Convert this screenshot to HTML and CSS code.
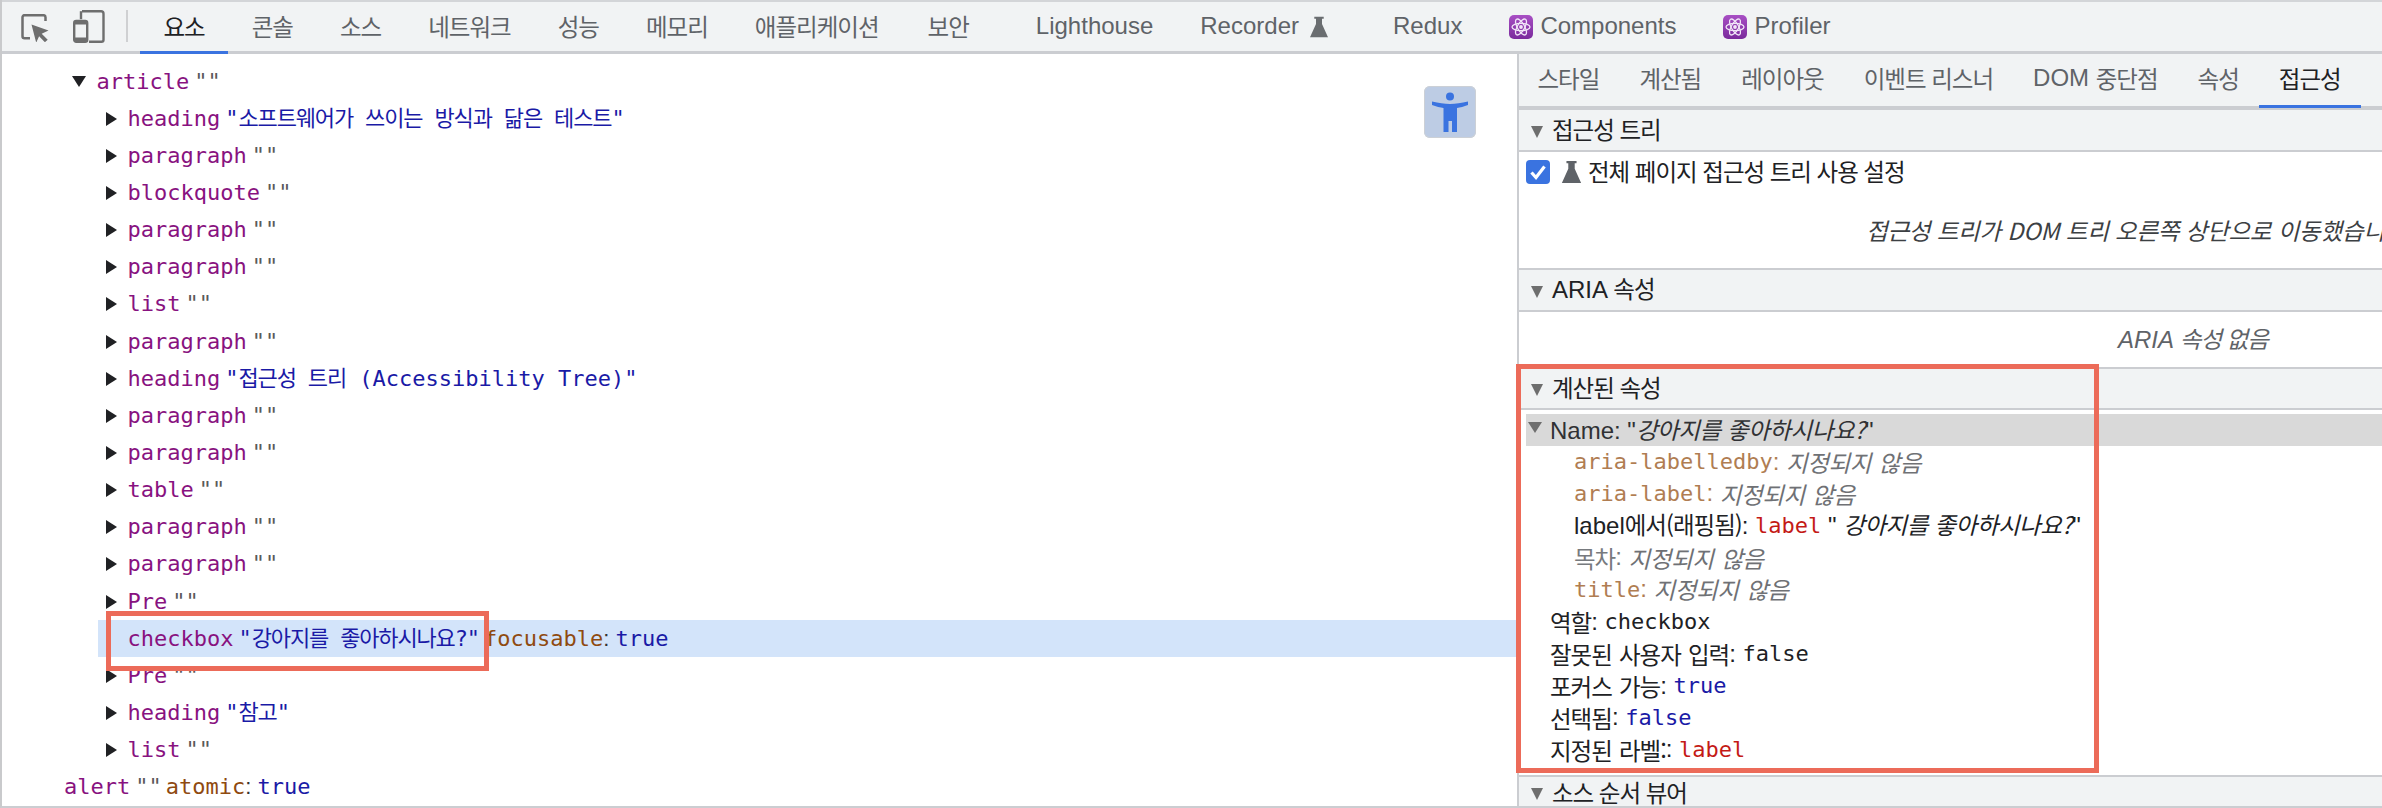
FILE: index.html
```html
<!DOCTYPE html>
<html lang="ko">
<head>
<meta charset="utf-8">
<title>DevTools 접근성</title>
<link rel="stylesheet" href="styles.css">
</head>
<body>
<div class="app">
  <header class="toolbar">
    <div class="tool-icons">
      <svg class="ic-inspect" width="28" height="28" viewBox="0 0 28 28"><path d="M9 24.2H3.5a2 2 0 0 1-2-2V3.2a2 2 0 0 1 2-2h19a2 2 0 0 1 2 2V7" fill="none" stroke="#6e6e6e" stroke-width="2.5"/><path d="M10.5 10.5l17 6-6.800 3.200 6 6-2.800 2.500-5.800-6-2.900 6.500z" fill="#6e6e6e"/></svg>
      <svg class="ic-device" width="32" height="33" viewBox="0 0 32 33"><path d="M9 1.200h19a2.500 2.500 0 0 1 2.500 2.500v26a2 2 0 0 1-2 2H16" fill="none" stroke="#6e6e6e" stroke-width="2.400"/><path d="M8 1.200v8" stroke="#6e6e6e" stroke-width="2.400"/><rect x="1.200" y="11" width="13" height="20.800" rx="2" fill="none" stroke="#6e6e6e" stroke-width="2.400"/><rect x="1" y="11" width="13.500" height="3.500" fill="#6e6e6e"/><rect x="1" y="27.500" width="13.500" height="4.500" fill="#6e6e6e"/></svg>
    </div>
    <div class="vsep"></div>
    <nav class="tabs">
      <span class="tab ko active">요소</span>
      <span class="tab ko">콘솔</span>
      <span class="tab ko">소스</span>
      <span class="tab ko">네트워크</span>
      <span class="tab ko">성능</span>
      <span class="tab ko">메모리</span>
      <span class="tab ko">애플리케이션</span>
      <span class="tab ko tab-sec">보안</span>
      <span class="tab tab-gap">Lighthouse</span>
      <span class="tab">Recorder<svg class="flask flask-tab" width="18" height="24" viewBox="0 0 21 24"><path d="M5 0h11v2.500h-2v6L21 24H0L7 8.500v-6H5z" fill="#6a6d70"/></svg></span>
      <span class="tab tab-redux">Redux</span>
      <span class="tab tab-react tab-components"><svg class="react" width="24" height="24" viewBox="0 0 24 24"><use href="#react-icon"/></svg>Components</span>
      <span class="tab tab-react"><svg class="react" width="24" height="24" viewBox="0 0 24 24"><use href="#react-icon"/></svg>Profiler</span>
    </nav>
  </header>

  <main class="main">
    <section class="tree">
      <div class="row d1"><i class="caret down"></i><b class="role">article</b><span class="q">""</span></div>
      <div class="row d2"><i class="caret"></i><b class="role">heading</b><span class="str">"<span class="han">소프트웨어가 쓰이는 방식과 닮은 테스트</span>"</span></div>
      <div class="row d2"><i class="caret"></i><b class="role">paragraph</b><span class="q">""</span></div>
      <div class="row d2"><i class="caret"></i><b class="role">blockquote</b><span class="q">""</span></div>
      <div class="row d2"><i class="caret"></i><b class="role">paragraph</b><span class="q">""</span></div>
      <div class="row d2"><i class="caret"></i><b class="role">paragraph</b><span class="q">""</span></div>
      <div class="row d2"><i class="caret"></i><b class="role">list</b><span class="q">""</span></div>
      <div class="row d2"><i class="caret"></i><b class="role">paragraph</b><span class="q">""</span></div>
      <div class="row d2"><i class="caret"></i><b class="role">heading</b><span class="str">"<span class="han">접근성 트리</span> (Accessibility Tree)"</span></div>
      <div class="row d2"><i class="caret"></i><b class="role">paragraph</b><span class="q">""</span></div>
      <div class="row d2"><i class="caret"></i><b class="role">paragraph</b><span class="q">""</span></div>
      <div class="row d2"><i class="caret"></i><b class="role">table</b><span class="q">""</span></div>
      <div class="row d2"><i class="caret"></i><b class="role">paragraph</b><span class="q">""</span></div>
      <div class="row d2"><i class="caret"></i><b class="role">paragraph</b><span class="q">""</span></div>
      <div class="row d2"><i class="caret"></i><b class="role">Pre</b><span class="q">""</span></div>
      <div class="row d2 selected"><i class="caret none"></i><b class="role">checkbox</b><span class="str">"<span class="han">강아지를 좋아하시나요?</span>"</span><span class="attr">focusable</span><span class="colon">: </span><span class="val">true</span></div>
      <div class="row d2"><i class="caret"></i><b class="role">Pre</b><span class="q">""</span></div>
      <div class="row d2"><i class="caret"></i><b class="role">heading</b><span class="str">"<span class="han">참고</span>"</span></div>
      <div class="row d2"><i class="caret"></i><b class="role">list</b><span class="q">""</span></div>
      <div class="row d0"><b class="role">alert</b><span class="q">""</span><span class="attr">atomic</span><span class="colon">: </span><span class="val">true</span></div>

      <button class="a11y-btn" type="button" aria-label="접근성 트리">
        <svg width="52" height="52" viewBox="0 0 52 52"><circle cx="26" cy="10.500" r="4" fill="#3a73e0"/><path d="M8 15.500C15 17 20 18 26 18s11-1 18-2.500V19c-4 1.500-8 2.500-11 3V46h-5V35h-3.500v11H19.500V22c-3-.5-7.500-1.500-11.500-3z" fill="#3a73e0"/></svg>
      </button>
      <div class="mark mark-row"></div>
    </section>

    <aside class="side">
      <nav class="side-tabs">
        <span class="stab ko">스타일</span>
        <span class="stab ko">계산됨</span>
        <span class="stab ko">레이아웃</span>
        <span class="stab ko">이벤트 리스너</span>
        <span class="stab">DOM <span class="ko">중단점</span></span>
        <span class="stab ko">속성</span>
        <span class="stab ko active">접근성</span>
      </nav>

      <h2 class="sec-head h40"><i class="tri"></i><span class="ko">접근성 트리</span></h2>
      <div class="sec-body tree-opt">
        <label class="opt"><span class="check"><svg width="24" height="24" viewBox="0 0 24 24"><path d="M5.500 12.500l4.500 5 8.500-11" fill="none" stroke="#fff" stroke-width="3.200"/></svg></span><svg class="flask" width="21" height="22" viewBox="0 0 21 24"><path d="M5 0h11v2.500h-2v6L21 24H0L7 8.500v-6H5z" fill="#5f6368"/></svg><span class="ko opt-text">전체 페이지 접근성 트리 사용 설정</span></label>
        <p class="note note-moved ko">접근성 트리가 DOM 트리 오른쪽 상단으로 이동했습니다.</p>
      </div>

      <h2 class="sec-head h40">
        <i class="tri"></i><span>ARIA <span class="ko">속성</span></span></h2>
      <div class="sec-body aria-body"><p class="note note-aria">ARIA <span class="ko">속성 없음</span></p></div>

      <h2 class="sec-head h39"><i class="tri"></i><span class="ko">계산된 속성</span></h2>
      <div class="sec-body computed">
        <div class="name-row"><i class="tri tri-name"></i><span>Name: "<em class="ko">강아지를 좋아하시나요?</em>"</span></div>
        <div class="prop in"><span class="mono tan">aria-labelledby</span><span class="tan">: </span><em class="ko muted">지정되지 않음</em></div>
        <div class="prop in"><span class="mono tan">aria-label</span><span class="tan">: </span><em class="ko muted">지정되지 않음</em></div>
        <div class="prop in"><span>label<span class="ko">에서(래핑됨)</span>: </span><span class="mono red">label</span><span> " <em class="ko">강아지를 좋아하시나요?</em>"</span></div>
        <div class="prop in"><span class="ko gray">목차</span><span class="gray">: </span><em class="ko muted">지정되지 않음</em></div>
        <div class="prop in"><span class="mono tan">title</span><span class="tan">: </span><em class="ko muted">지정되지 않음</em></div>
        <div class="prop"><span class="ko">역할</span><span>: </span><span class="mono">checkbox</span></div>
        <div class="prop"><span class="ko">잘못된 사용자 입력</span><span>: </span><span class="mono">false</span></div>
        <div class="prop"><span class="ko">포커스 가능</span><span>: </span><span class="mono blue">true</span></div>
        <div class="prop"><span class="ko">선택됨</span><span>: </span><span class="mono blue">false</span></div>
        <div class="prop"><span class="ko">지정된 라벨:</span><span>: </span><span class="mono red">label</span></div>
      </div>

      <h2 class="sec-head h29"><i class="tri"></i><span class="ko">소스 순서 뷰어</span></h2>

      <div class="mark mark-panel"></div>
    </aside>
  </main>
</div>

<svg class="defs" width="0" height="0" aria-hidden="true">
  <defs>
    <linearGradient id="react-bg" x1="0" y1="0" x2="0" y2="1"><stop offset="0" stop-color="#a84fc4"/><stop offset="1" stop-color="#7a2a9c"/></linearGradient>
    <g id="react-icon">
      <rect width="24" height="24" rx="5" fill="url(#react-bg)"/>
      <g fill="none" stroke="#f2e6f8" stroke-width="1.300">
        <ellipse cx="12" cy="12" rx="9" ry="3.600"/>
        <ellipse cx="12" cy="12" rx="9" ry="3.600" transform="rotate(60 12 12)"/>
        <ellipse cx="12" cy="12" rx="9" ry="3.600" transform="rotate(120 12 12)"/>
      </g>
      <circle cx="12" cy="12" r="1.900" fill="#f2e6f8"/>
    </g>
  </defs>
</svg>
</body>
</html>
```
FILE: styles.css
```css
* { box-sizing: border-box; }
html, body { margin: 0; height: 100%; background: #fff; overflow: hidden; }
.app {
  width: 2382px; height: 808px; display: flex; flex-direction: column;
  border-left: 2px solid #c9cacc; border-bottom: 2px solid #cbcdd1;
  font: 24px/1.2 "Liberation Sans", "Noto Sans CJK KR", sans-serif;
  color: #202124; position: relative; overflow: hidden;
}
.ko { font-family: "Noto Sans CJK KR", "Liberation Sans", sans-serif; letter-spacing: -1px; font-size: 23.500px; }
.defs { position: absolute; }

/* main toolbar */
.toolbar {
  height: 54px; flex: none; display: flex; align-items: stretch;
  background: #f1f3f4; border-top: 2px solid #d3d5d8; border-bottom: 3px solid #cbcdd1;
}
.tool-icons { width: 124px; flex: none; display: flex; align-items: center; padding-left: 19px; }
.ic-inspect { margin-top: 2px; flex: none; }
.ic-device { margin-left: 24px; flex: none; margin-top: -1px; }
.vsep { width: 2px; height: 32px; margin-top: 8px; background: #cfd0d2; flex: none; }
.tabs { display: flex; margin-left: 12px; height: 52px; }
.tab {
  display: flex; align-items: center; padding: 0 23.500px 3px; color: #5f6368; position: relative; white-space: nowrap;
}
.tab.active { color: #202124; }
.tab.active::after { content: ""; position: absolute; left: 0; right: 0; bottom: 0; height: 3px; background: #3a73e0; }
.tab-sec { margin-left: 2px; }
.tab-gap { margin-left: 20px; }
.tab-redux { margin-left: 18px; }
.tab-components { margin-left: 0; }
.flask { flex: none; }
.flask-tab { margin-left: 11px; }
.react { margin-right: 7px; flex: none; }

/* main */
.main { flex: 1; display: flex; min-height: 0; }
.tree {
  width: 1515px; flex: none; padding-top: 9px; position: relative;
  font: 22px/1 "DejaVu Sans Mono", "Noto Sans CJK KR", monospace;
}
.row { height: 37.150px; display: flex; align-items: center; white-space: pre; }
.d0 { padding-left: 62px; }
.d1 { padding-left: 69.500px; }
.d2 { padding-left: 103.500px; }
.selected { background: #d3e4fa; margin-left: 96px; padding-left: 7.500px; }
.caret {
  width: 0; height: 0; flex: none; margin-right: 11px;
  border-left: 11px solid #202124; border-top: 7px solid transparent; border-bottom: 7px solid transparent;
}
.caret.down {
  margin-right: 11px; border-top: 11px solid #202124; border-bottom: 0;
  border-left: 7px solid transparent; border-right: 7px solid transparent;
}
.caret.none { border-color: transparent; }
.role { font-weight: normal; color: #881280; margin-right: 5px; }
.q { color: #5a5a5a; margin-right: 4px; }
.str { color: #1a1aa6; margin-right: 4px; }
.han { letter-spacing: -1.150px; }
.attr { color: #8f4a10; }
.colon { font-family: "Liberation Sans", sans-serif; color: #333; }
.val { color: #1a1aa6; }

.a11y-btn {
  position: absolute; left: 1422px; top: 32px; width: 52px; height: 52px; padding: 0;
  border: 0; border-radius: 6px; background: #bdcce4; box-shadow: inset 0 0 0 1px #ccd0d6;
}
.a11y-btn svg { display: block; }
.mark { position: absolute; border: 5px solid #ec6b59; pointer-events: none; }
.mark-row { left: 104px; top: 557px; width: 383px; height: 60px; }

/* sidebar */
.side { flex: 1; min-width: 0; border-left: 2px solid #cbcdd1; position: relative; display: flex; flex-direction: column; }
.side-tabs {
  height: 56px; flex: none; display: flex; padding: 0 0 3px; margin-left: 0;
  background: #f1f3f4; border-bottom: 4px solid #cbcdd1;
}
.stab { display: flex; align-items: center; padding: 0 20px; color: #5f6368; white-space: pre; position: relative; }
.stab:first-child { padding-left: 18.500px; }
.stab.active { color: #202124; }
.stab.active::after { content: ""; position: absolute; left: 0; right: 0; bottom: -5px; height: 3px; background: #3a73e0; }
.sec-head {
  margin: 0; flex: none; display: flex; align-items: center; gap: 9px; padding: 0 0 2px 12px;
  font-size: 24px; font-weight: normal; color: #202124; background: #f1f3f4; border-bottom: 2px solid #cbcdd1;
}
.h40 { height: 42px; }
.h39 { height: 41px; }
.h29 { height: 31px; flex: none; border-bottom: 0; padding-bottom: 0; }
.tri {
  width: 0; height: 0; flex: none; margin-top: 5px;
  border-top: 12px solid #6e6e6e; border-left: 6px solid transparent; border-right: 6px solid transparent;
}
.h29 .tri { margin-top: 3px; }
.sec-body { flex: none; border-bottom: 2px solid #cbcdd1; background: #fff; overflow: hidden; white-space: nowrap; }
.tree-opt { height: 118px; padding: 8px 0 0 7px; }
.opt { display: flex; align-items: center; height: 24px; }
.opt-text { margin: -2px 0 0 6px; }
.check { width: 24px; height: 24px; border-radius: 4px; background: #3a73e0; flex: none; }
.check svg { display: block; }
.opt .flask { margin-left: 11px; }
.note { margin: 0; font-style: italic; color: #3c4043; }
.note-moved { padding-left: 340px; margin-top: 32px; letter-spacing: -.2px; }
.aria-body { height: 57px; display: flex; align-items: center; }
.note-aria { padding-left: 599px; color: #5f6368; }
.computed { height: 367px; padding: 4px 0 0 7px; }
.name-row {
  height: 32px; background: #d9d9d9; display: flex; align-items: center; padding-left: 2px; gap: 8px; color: #303134;
}
.tri-name { margin-top: -5px; border-top-width: 11px; border-left-width: 7px; border-right-width: 7px; }
.prop { height: 31.900px; display: flex; align-items: center; padding-left: 24px; padding-top: 1.500px; white-space: pre; }
.prop.in { padding-left: 48px; padding-top: 0; }
.prop > .ko { word-spacing: 1.500px; }
em, em.ko { font-style: italic; letter-spacing: -.4px; }
.mono { font: 22px/1 "DejaVu Sans Mono", monospace; }
.tan { color: #b07d52; }
.muted { color: #6f7175; }
.gray { color: #777a7e; }
.red { color: #c41a16; }
.blue { color: #1a1aa6; }
.mark-panel { left: -3px; top: 310px; width: 583px; height: 409px; }
```
